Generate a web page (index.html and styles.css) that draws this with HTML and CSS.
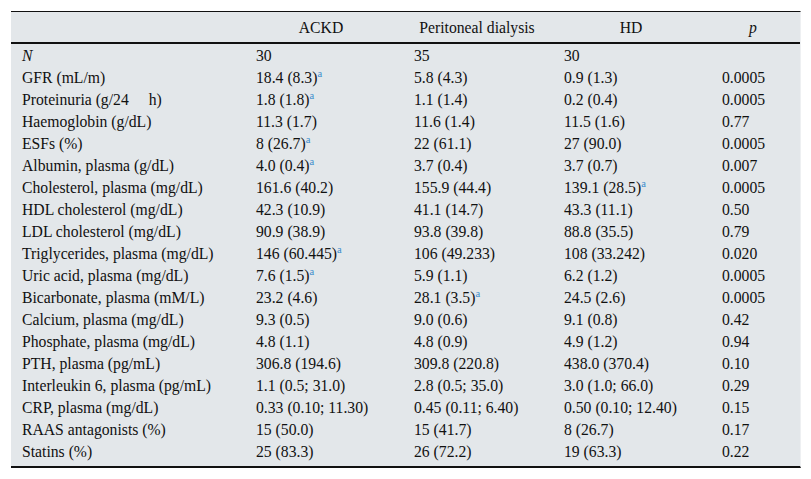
FILE: index.html
```html
<!DOCTYPE html>
<html>
<head>
<meta charset="utf-8">
<link rel="stylesheet" href="styles.css">
</head>
<body>
<div class="panel">
<table class="data">
<colgroup>
<col class="c1"><col class="c2"><col class="c3"><col class="c4"><col class="c5">
</colgroup>
<thead>
<tr><th></th><th>ACKD</th><th>Peritoneal dialysis</th><th>HD</th><th><i>p</i></th></tr>
</thead>
<tbody>
<tr><td><i>N</i></td><td>30</td><td>35</td><td>30</td><td></td></tr>
<tr><td>GFR (mL/m)</td><td>18.4 (8.3)<sup>a</sup></td><td>5.8 (4.3)</td><td>0.9 (1.3)</td><td>0.0005</td></tr>
<tr><td>Proteinuria (g/24<span class="gap"></span>h)</td><td>1.8 (1.8)<sup>a</sup></td><td>1.1 (1.4)</td><td>0.2 (0.4)</td><td>0.0005</td></tr>
<tr><td>Haemoglobin (g/dL)</td><td>11.3 (1.7)</td><td>11.6 (1.4)</td><td>11.5 (1.6)</td><td>0.77</td></tr>
<tr><td>ESFs (%)</td><td>8 (26.7)<sup>a</sup></td><td>22 (61.1)</td><td>27 (90.0)</td><td>0.0005</td></tr>
<tr><td>Albumin, plasma (g/dL)</td><td>4.0 (0.4)<sup>a</sup></td><td>3.7 (0.4)</td><td>3.7 (0.7)</td><td>0.007</td></tr>
<tr><td>Cholesterol, plasma (mg/dL)</td><td>161.6 (40.2)</td><td>155.9 (44.4)</td><td>139.1 (28.5)<sup>a</sup></td><td>0.0005</td></tr>
<tr><td>HDL cholesterol (mg/dL)</td><td>42.3 (10.9)</td><td>41.1 (14.7)</td><td>43.3 (11.1)</td><td>0.50</td></tr>
<tr><td>LDL cholesterol (mg/dL)</td><td>90.9 (38.9)</td><td>93.8 (39.8)</td><td>88.8 (35.5)</td><td>0.79</td></tr>
<tr><td>Triglycerides, plasma (mg/dL)</td><td>146 (60.445)<sup>a</sup></td><td>106 (49.233)</td><td>108 (33.242)</td><td>0.020</td></tr>
<tr><td>Uric acid, plasma (mg/dL)</td><td>7.6 (1.5)<sup>a</sup></td><td>5.9 (1.1)</td><td>6.2 (1.2)</td><td>0.0005</td></tr>
<tr><td>Bicarbonate, plasma (mM/L)</td><td>23.2 (4.6)</td><td>28.1 (3.5)<sup>a</sup></td><td>24.5 (2.6)</td><td>0.0005</td></tr>
<tr><td>Calcium, plasma (mg/dL)</td><td>9.3 (0.5)</td><td>9.0 (0.6)</td><td>9.1 (0.8)</td><td>0.42</td></tr>
<tr><td>Phosphate, plasma (mg/dL)</td><td>4.8 (1.1)</td><td>4.8 (0.9)</td><td>4.9 (1.2)</td><td>0.94</td></tr>
<tr><td>PTH, plasma (pg/mL)</td><td>306.8 (194.6)</td><td>309.8 (220.8)</td><td>438.0 (370.4)</td><td>0.10</td></tr>
<tr><td>Interleukin 6, plasma (pg/mL)</td><td>1.1 (0.5; 31.0)</td><td>2.8 (0.5; 35.0)</td><td>3.0 (1.0; 66.0)</td><td>0.29</td></tr>
<tr><td>CRP, plasma (mg/dL)</td><td>0.33 (0.10; 11.30)</td><td>0.45 (0.11; 6.40)</td><td>0.50 (0.10; 12.40)</td><td>0.15</td></tr>
<tr><td>RAAS antagonists (%)</td><td>15 (50.0)</td><td>15 (41.7)</td><td>8 (26.7)</td><td>0.17</td></tr>
<tr><td>Statins (%)</td><td>25 (83.3)</td><td>26 (72.2)</td><td>19 (63.3)</td><td>0.22</td></tr>
</tbody>
</table>
</div>
</body>
</html>
```

FILE: styles.css
```css
html, body {
  margin: 0;
  padding: 0;
  background: #ffffff;
}
body {
  padding: 11px 0 0 11px;
  font-family: "Liberation Serif", "Times New Roman", serif;
  font-size: 15.7px;
  color: #111111;
}
.panel {
  width: 789px;
  background: #e3e7ea;
  border-top: 1px solid #111111;
  border-bottom: 2px solid #111111;
  border-right: 1px solid #eef0f2;
  padding-bottom: 4px;
  box-sizing: content-box;
}
.data {
  width: 789px;
  table-layout: fixed;
  border-collapse: collapse;
  border-spacing: 0;
}
.c1 { width: 237px; }
.c2 { width: 158px; }
.c3 { width: 150px; }
.c4 { width: 158px; }
.c5 { width: 86px; }
.data th {
  height: 29px;
  padding: 1px 16px 0 8px;
  font-weight: normal;
  text-align: center;
  border-bottom: 2px solid #111111;
  vertical-align: middle;
  line-height: 29px;
}
.data td {
  height: 21px;
  padding: 1px 16px 0 8px;
  text-align: left;
  vertical-align: middle;
  white-space: nowrap;
  line-height: 21px;
}
.data th:first-child,
.data td:first-child {
  padding-left: 11px;
}
.data th:nth-child(2) {
  padding-right: 20px;
}
.data sup {
  font-size: 10.5px;
  color: #3a8ccc;
  line-height: 0;
  vertical-align: 6px;
}
.gap {
  display: inline-block;
  width: 20px;
}
```
